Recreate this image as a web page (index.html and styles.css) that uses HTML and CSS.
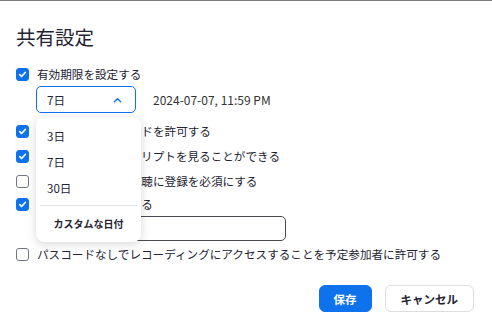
FILE: index.html
```html
<!DOCTYPE html>
<html lang="ja">
<head>
    <meta charset="UTF-8">
    <meta name="viewport" content="width=device-width, initial-scale=1.0">
    <title>共有設定</title>
    <link rel="stylesheet" href="styles.css">
</head>
<body>
    <div class="dialog">
        <h1>共有設定</h1>

        <label class="check-row">
            <span class="box checked"><svg viewBox="0 0 12 12"><path d="M3 6.2l2 2 4-4.4"/></svg></span>
            有効期限を設定する
        </label>

        <div class="expire-row">
            <div class="select-wrap">
                <div class="select">
                    <span>7日</span>
                    <svg class="chevron" viewBox="0 0 10 6"><path d="M1.5 5L5 1.5 8.5 5"/></svg>
                </div>
                <div class="menu">
                    <div class="menu-item">3日</div>
                    <div class="menu-item">7日</div>
                    <div class="menu-item">30日</div>
                    <div class="menu-sep"></div>
                    <div class="menu-custom">カスタムな日付</div>
                </div>
            </div>
            <span class="date">2024-07-07, 11:59 PM</span>
        </div>

        <label class="check-row row-gap">
            <span class="box checked"><svg viewBox="0 0 12 12"><path d="M3 6.2l2 2 4-4.4"/></svg></span>
            視聴者にダウンロードを許可する
        </label>
        <label class="check-row">
            <span class="box checked"><svg viewBox="0 0 12 12"><path d="M3 6.2l2 2 4-4.4"/></svg></span>
            視聴者はトランスクリプトを見ることができる
        </label>
        <label class="check-row">
            <span class="box"></span>
            オンデマンドでの視聴に登録を必須にする
        </label>
        <label class="check-row tight">
            <span class="box checked"><svg viewBox="0 0 12 12"><path d="M3 6.2l2 2 4-4.4"/></svg></span>
            パスコードで保護する
        </label>
        <div class="pass-input"></div>

        <label class="check-row">
            <span class="box"></span>
            パスコードなしでレコーディングにアクセスすることを予定参加者に許可する
        </label>

        <div class="actions">
            <button class="btn primary">保存</button>
            <button class="btn">キャンセル</button>
        </div>
    </div>
</body>
</html>
```

FILE: styles.css
```css
body {
    margin: 0;
    background-color: #fff;
    font-family: "Noto Sans CJK JP", "Noto Sans", sans-serif;
    color: #232333;
}
.dialog {
    border-top: 1px solid #7a7a7a;
    padding: 0 18px 0 16px;
    height: 330px;
    box-sizing: border-box;
}
h1 {
    margin: 22px 0 0;
    font-size: 19.5px;
    font-weight: 400;
    line-height: 28px;
}
.check-row {
    display: flex;
    align-items: center;
    gap: 8px;
    height: 20px;
    margin-top: 5px;
    font-size: 11.6px;
    white-space: nowrap;
}
h1 + .check-row {
    margin-top: 13px;
}
.check-row.row-gap {
    margin-top: 8px;
}
.check-row.tight {
    margin-top: 3px;
}
.box {
    width: 13px;
    height: 13px;
    box-sizing: border-box;
    border: 1.2px solid #6e7680;
    border-radius: 3px;
    flex-shrink: 0;
    display: flex;
}
.box.checked {
    background-color: #0e72ed;
    border-color: #0e72ed;
}
.box svg {
    width: 100%;
    height: 100%;
    fill: none;
    stroke: #fff;
    stroke-width: 1.8;
    stroke-linecap: round;
    stroke-linejoin: round;
}
.expire-row {
    display: flex;
    align-items: center;
    gap: 17px;
    margin: 2px 0 0 20px;
}
.select-wrap {
    position: relative;
}
.select {
    width: 100px;
    height: 27px;
    box-sizing: border-box;
    border: 1px solid #0e72ed;
    border-radius: 5px;
    display: flex;
    align-items: center;
    justify-content: space-between;
    padding: 0 13px 0 10px;
    font-size: 11.6px;
}
.chevron {
    width: 9px;
    height: 6px;
    fill: none;
    stroke: #0e72ed;
    stroke-width: 1.5;
    stroke-linecap: round;
    stroke-linejoin: round;
}
.date {
    font-size: 12px;
    color: #333;
}
.menu {
    position: absolute;
    left: 0;
    top: 31px;
    width: 105px;
    padding-top: 6px;
    background-color: #fff;
    border-radius: 8px;
    box-shadow: 0 2px 10px rgba(0,0,0,0.16);
    z-index: 2;
}
.menu-item {
    height: 26px;
    line-height: 26px;
    padding-left: 11px;
    font-size: 11.6px;
}
.menu-sep {
    height: 1px;
    margin: 4px 4px 0;
    background-color: #dfe1e4;
}
.menu-custom {
    height: 36px;
    line-height: 36px;
    text-align: center;
    font-size: 10px;
    font-weight: 700;
}
.pass-input {
    width: 249px;
    height: 25px;
    box-sizing: border-box;
    margin: 2px 0 0 21px;
    border: 1px solid #4a4a55;
    border-radius: 5px;
}
.pass-input + .check-row {
    margin-top: 3px;
}
.actions {
    display: flex;
    justify-content: flex-end;
    gap: 13px;
    margin-top: 21px;
}
.btn {
    height: 27px;
    padding: 0 15px;
    border: 1px solid #dcdde1;
    border-radius: 6px;
    background-color: #fff;
    color: #232333;
    font-family: inherit;
    font-size: 11.5px;
    font-weight: 700;
    cursor: pointer;
}
.btn.primary {
    background-color: #0e72ed;
    border-color: #0e72ed;
    color: #fff;
    padding: 0 14px;
}
```
